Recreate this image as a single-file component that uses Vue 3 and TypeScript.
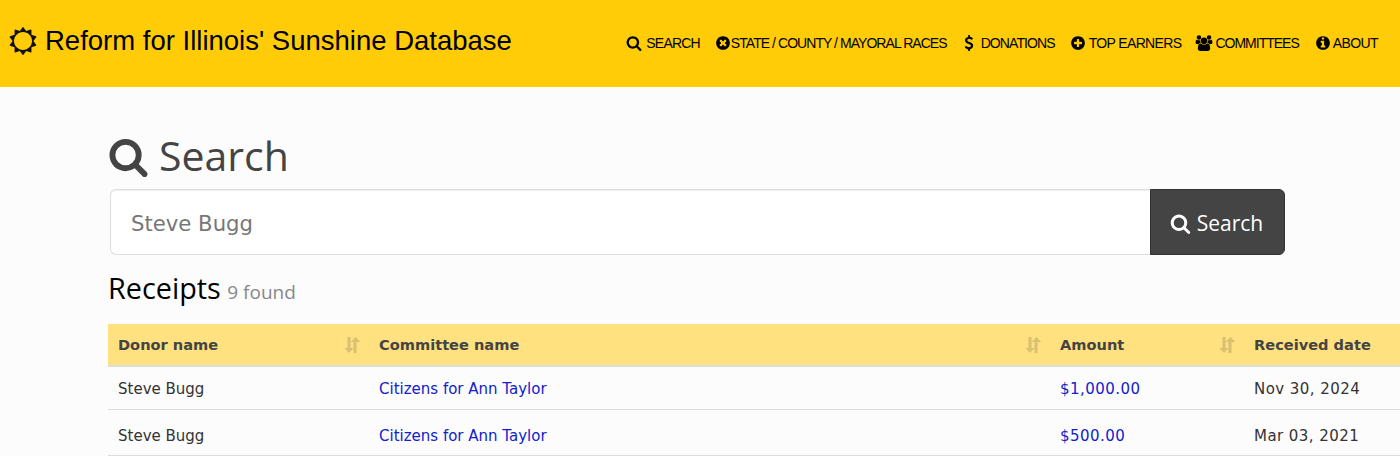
<script setup lang="ts">
interface Receipt { donor: string; committee: string; amount: string; date: string }
const nav: { label: string; icon: string; view: string; cls: string }[] = [
  { label: 'Search', icon: 'search', view: '0 0 1792 1792', cls: 'm-search' },
  { label: 'State / County / Mayoral Races', icon: 'times', view: '0 0 1792 1792', cls: 'm-state' },
  { label: 'Donations', icon: 'usd', view: '0 0 1792 1792', cls: 'm-donations' },
  { label: 'Top Earners', icon: 'plus', view: '0 0 1792 1792', cls: 'm-top' },
  { label: 'Committees', icon: 'users', view: '0 0 2048 1792', cls: 'm-committees' },
  { label: 'About', icon: 'info', view: '0 0 1792 1792', cls: 'm-about' },
]
const icons: Record<string, string> = {
  search: 'M1216 832q0-185-131.5-316.5t-316.5-131.5-316.5 131.5-131.5 316.5 131.5 316.5 316.5 131.5 316.5-131.5 131.5-316.5zm512 832q0 52-38 90t-90 38q-54 0-90-38l-343-342q-179 124-399 124-143 0-273.5-55.5t-225-150-150-225-55.5-273.5 55.5-273.5 150-225 225-150 273.5-55.5 273.5 55.5 225 150 150 225 55.5 273.5q0 220-124 399l343 343q37 37 37 90z',
  times: 'M1277 1122q0-26-19-45l-181-181 181-181q19-19 19-45 0-27-19-46l-90-90q-19-19-46-19-26 0-45 19l-181 181-181-181q-19-19-45-19-27 0-46 19l-90 90q-19 19-19 46 0 26 19 45l181 181-181 181q-19 19-19 45 0 27 19 46l90 90q19 19 46 19 26 0 45-19l181-181 181 181q19 19 45 19 27 0 46-19l90-90q19-19 19-46zm387-226q0 209-103 385.5t-279.5 279.5-385.5 103-385.5-103-279.5-279.5-103-385.5 103-385.5 279.5-279.5 385.5-103 385.5 103 279.5 279.5 103 385.5z',
  usd: 'M1362 1185q0 153-99.5 263.5t-258.5 136.5v175q0 14-9 23t-23 9h-135q-13 0-22.5-9.5t-9.5-22.5v-175q-66-9-127.5-31t-101.5-44.5-74-48-46.5-37.5-17.5-18q-17-21-2-41l103-135q7-10 23-12 15-2 24 9l2 2q113 99 243 125 37 8 74 8 81 0 142.5-43t61.5-122q0-28-15-53t-33.5-42-58.5-37.5-66-32-80-32.5q-39-16-61.5-25t-61.5-26.5-62.5-31-56.5-35.5-53.5-42.5-43.5-49-35.5-58-21-66.5-8.5-78q0-138 98-242t255-134v-180q0-13 9.5-22.5t22.5-9.5h135q14 0 23 9t9 23v176q57 6 110.5 23t87 33.5 63.5 37.5 39 29 15 14q17 18 5 38l-81 146q-8 15-23 16-14 3-27-7-3-3-14.5-12t-39-26.5-58.5-32-74.5-26-85.5-11.5q-95 0-155 43t-60 111q0 26 8.5 48t29.5 41.5 39.5 33 56 31 60.5 27 70 27.5q53 20 81 31.5t76 35 75.5 42.5 62 50 53 63.5 31.5 76.5 13 94z',
  plus: 'M1344 960v-128q0-26-19-45t-45-19h-256v-256q0-26-19-45t-45-19h-128q-26 0-45 19t-19 45v256h-256q-26 0-45 19t-19 45v128q0 26 19 45t45 19h256v256q0 26 19 45t45 19h128q26 0 45-19t19-45v-256h256q26 0 45-19t19-45zm320-64q0 209-103 385.5t-279.5 279.5-385.5 103-385.5-103-279.5-279.5-103-385.5 103-385.5 279.5-279.5 385.5-103 385.5 103 279.5 279.5 103 385.5z',
  users: 'M657 896q-162 5-265 128h-134q-82 0-138-40.5t-56-118.5q0-353 124-353 6 0 43.5 21t97.5 42.5 119 21.5q67 0 133-23-5 37-5 66 0 139 81 256zm1071 637q0 120-73 189.5t-194 69.5h-874q-121 0-194-69.5t-73-189.5q0-53 3.5-103.5t14-109 26.5-108.5 43-97.5 62-81 85.5-53.5 111.5-20q10 0 43 21.5t73 48 107 48 135 21.5 135-21.5 107-48 73-48 43-21.5q61 0 111.5 20t85.5 53.5 62 81 43 97.5 26.5 108.5 14 109 3.5 103.5zm-1024-1277q0 106-75 181t-181 75-181-75-75-181 75-181 181-75 181 75 75 181zm704 384q0 159-112.5 271.5t-271.5 112.5-271.5-112.5-112.5-271.5 112.5-271.5 271.5-112.5 271.5 112.5 112.5 271.5zm576 225q0 78-56 118.5t-138 40.5h-134q-103-123-265-128 81-117 81-256 0-29-5-66 66 23 133 23 59 0 119-21.5t97.5-42.5 43.5-21q124 0 124 353zm-128-609q0 106-75 181t-181 75-181-75-75-181 75-181 181-75 181 75 75 181z',
  info: 'M1152 1376v-160q0-14-9-23t-23-9h-96v-512q0-14-9-23t-23-9h-320q-14 0-23 9t-9 23v160q0 14 9 23t23 9h96v320h-96q-14 0-23 9t-9 23v160q0 14 9 23t23 9h448q14 0 23-9t9-23zm-128-896v-160q0-14-9-23t-23-9h-192q-14 0-23 9t-9 23v160q0 14 9 23t23 9h192q14 0 23-9t9-23zm640 416q0 209-103 385.5t-279.5 279.5-385.5 103-385.5-103-279.5-279.5-103-385.5 103-385.5 279.5-279.5 385.5-103 385.5 103 279.5 279.5 103 385.5z',
}
const sun = 'M1472 896q0-117-45.5-223.5t-123-184-184-123-223.5-45.5-223.5 45.5-184 123-123 184-45.5 223.5 45.5 223.5 123 184 184 123 223.5 45.5 223.5-45.5 184-123 123-184 45.5-223.5zm276 277q-4 15-20 20l-292 96v306q0 16-13 26-15 10-29 4l-292-94-180 248q-10 13-26 13t-26-13l-180-248-292 94q-14 6-29-4-13-10-13-26v-306l-292-96q-16-5-20-20-5-17 4-29l180-248-180-248q-9-13-4-29 4-15 20-20l292-96v-306q0-16 13-26 15-10 29-4l292 94 180-248q9-12 26-12t26 12l180 248 292-94q14-6 29 4 13 10 13 26v306l292 96q16 5 20 20 5 16-4 29l-180 248 180 248q9 12 4 29z'
const columns = ['Donor name', 'Committee name', 'Amount', 'Received date']
const rows: Receipt[] = [
  { donor: 'Steve Bugg', committee: 'Citizens for Ann Taylor', amount: '$1,000.00', date: 'Nov 30, 2024' },
  { donor: 'Steve Bugg', committee: 'Citizens for Ann Taylor', amount: '$500.00', date: 'Mar 03, 2021' },
]
</script>

<template>
  <header class="topbar">
    <a class="brand">
      <svg class="sun" viewBox="0 0 1792 1792"><path :d="sun" /></svg>
      <span>Reform for Illinois' Sunshine Database</span>
    </a>
    <nav class="menu">
      <a v-for="item in nav" :key="item.label" class="menu-item" :class="item.cls">
        <svg :viewBox="item.view"><path :d="icons[item.icon]" /></svg>
        <span>{{ item.label }}</span>
      </a>
    </nav>
  </header>
  <main class="page">
    <h1 class="title">
      <svg viewBox="0 0 1792 1792"><path :d="icons.search" /></svg>
      <span>Search</span>
    </h1>
    <form class="search" @submit.prevent>
      <input class="field" type="text" value="Steve Bugg" />
      <button class="go" type="submit">
        <svg viewBox="0 0 1792 1792"><path :d="icons.search" /></svg>
        <span>Search</span>
      </button>
    </form>
    <h2 class="sub">Receipts <small>9 found</small></h2>
    <table class="grid">
      <colgroup>
        <col class="c1" /><col class="c2" /><col class="c3" /><col class="c4" />
      </colgroup>
      <thead>
        <tr>
          <th v-for="(c, i) in columns" :key="c">
            <span>{{ c }}</span>
            <svg v-if="i < 3" class="sort" viewBox="0 0 16 16">
              <path d="M3.500 0h3v11H9.500L5 16 .5 11h3zM9.500 16V5H6.800L11.500 0l4.700 5H12.500v11z" />
            </svg>
          </th>
        </tr>
      </thead>
      <tbody>
        <tr v-for="(r, i) in rows" :key="i">
          <td>{{ r.donor }}</td>
          <td><a>{{ r.committee }}</a></td>
          <td class="wide"><a>{{ r.amount }}</a></td>
          <td class="wide">{{ r.date }}</td>
        </tr>
      </tbody>
    </table>
  </main>
</template>

<style>
html, body { margin: 0; overflow: hidden; background: #fcfcfc; }
</style>

<style scoped>
.topbar {
  height: 87px;
  background: #ffcc07;
  display: flex;
  align-items: center;
  justify-content: space-between;
  padding: 0 22px 0 9px;
  color: #000;
  box-sizing: border-box;
}
.brand { display: flex; align-items: center; font: 27.5px "Liberation Sans", Arial, sans-serif; gap: 8px; margin-top: -5px; }
.sun { width: 28px; height: 28px; fill: #111; }
.menu { display: flex; gap: 15px; font: 14px "Liberation Sans", Arial, sans-serif; letter-spacing: -1px; text-transform: uppercase; margin-top: -2px; }
.menu-item { display: flex; align-items: center; gap: 4px; }
.menu-item svg { width: 16px; height: 16px; fill: #000; }
.m-search { letter-spacing: -.8px; }
.m-state { gap: 0; letter-spacing: -.95px; margin-right: -1px; }
.m-donations { letter-spacing: -.9px; }
.m-top { gap: 3px; letter-spacing: -.65px; margin-right: -1px; }
.m-committees { gap: 2px; margin-right: 1px; }
.m-committees svg { width: 18px; }
.m-about { gap: 2px; letter-spacing: -.6px; }
.page { padding: 0 0 0 108px; font-family: "Open Sans", sans-serif; }
.title {
  margin: 0;
  padding-top: 35px;
  display: flex;
  align-items: center;
  gap: 10px;
  height: 67px;
  font: 400 41px/61px "Open Sans", sans-serif;
  color: #444;
}
.title svg { width: 41px; height: 41px; fill: #444; margin-top: 2px; }
.search { display: flex; width: 1175px; height: 66px; margin: 0 0 0 2px; }
.field {
  flex: 1;
  min-width: 0;
  box-sizing: border-box;
  border: 1px solid #ddd;
  border-right: 0;
  border-radius: 6px 0 0 6px;
  background: #fff;
  padding: 2px 20px 0;
  font: 21.2px "DejaVu Sans", Verdana, sans-serif;
  color: #777;
  outline: none;
  box-shadow: inset 0 1px 1px rgba(0, 0, 0, .06);
}
.go {
  width: 135px;
  box-sizing: border-box;
  border: 1px solid #333;
  border-radius: 0 6px 6px 0;
  background: #444;
  color: #fff;
  display: flex;
  align-items: center;
  justify-content: center;
  gap: 6px;
  font: 21px "Open Sans", sans-serif;
  padding: 2px 2px 0 0;
}
.go svg { width: 21px; height: 21px; fill: #fff; }
.sub { margin: 14px 0 0; height: 39px; font: 400 28.8px/37px "Open Sans", sans-serif; color: #000; }
.sub small { font-size: 19px; color: #888; margin-left: -1px; }
.grid {
  margin-top: 16px;
  table-layout: fixed;
  width: 1336px;
  border-collapse: collapse;
  font: 15px "DejaVu Sans", Verdana, sans-serif;
  color: #333;
}
.c1 { width: 261px; } .c2 { width: 681px; } .c3 { width: 194px; } .c4 { width: 200px; }
th {
  background: #ffe17f;
  height: 41px;
  padding: 0 10px;
  text-align: left;
  font-weight: 700;
  font-size: 14.6px;
  color: #444;
  border-bottom: 2px solid #ddd;
  position: relative;
}
.sort { position: absolute; right: 9px; top: 13px; width: 16px; height: 16px; fill: #444; opacity: .2; }
td { padding: 3px 10px 0; border-bottom: 1px solid #ddd; height: 43px; box-sizing: border-box; }
tbody tr:nth-child(2) td { height: 46px; padding-top: 8px; }
.wide { letter-spacing: .45px; }
td a { color: #12c; }
</style>
